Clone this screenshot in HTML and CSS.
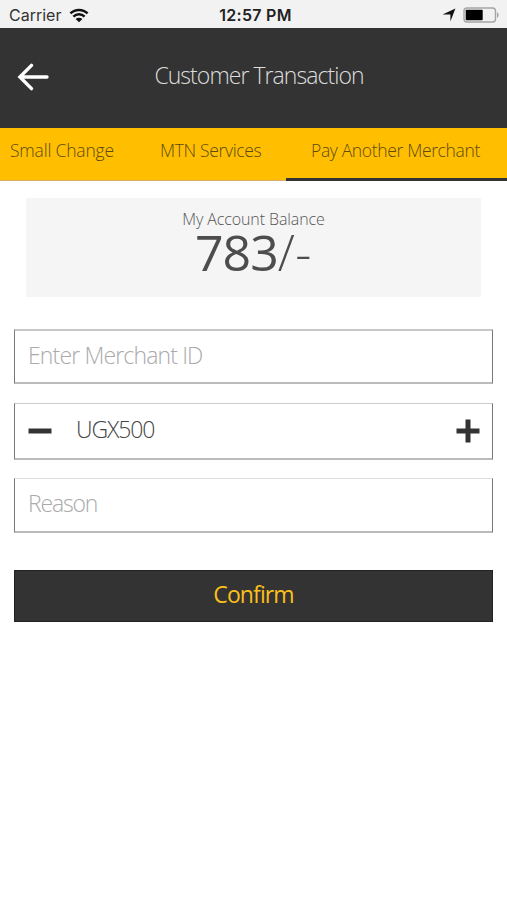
FILE: index.html
```html
<!DOCTYPE html>
<html lang="en">

<head>
    <meta charset="UTF-8">
    <meta name="viewport" content="width=device-width, initial-scale=1.0">
    <title>Customer Transaction</title>
    <link rel="stylesheet" href="styles.css">
</head>

<body>
    <div class="status-bar">
        <div class="status-left">
            <span class="carrier">Carrier</span>
            <svg class="wifi" width="20" height="15" viewBox="0 0 20 15">
                <path d="M1.4 5.4a12.4 12.4 0 0 1 17.2 0M4.4 8.6a8.1 8.1 0 0 1 11.2 0" fill="none" stroke="#111" stroke-width="2.5" />
                <path d="M6.6 11a4.9 4.9 0 0 1 6.8 0L10 14.3z" fill="#111" />
            </svg>
        </div>
        <span class="time">12:57 PM</span>
        <div class="status-right">
            <svg width="14" height="14" viewBox="0 0 14 14">
                <path d="M13.4 0.6L8.4 13.4V6.4H0.6z" fill="#111" />
            </svg>
            <svg width="37" height="16" viewBox="0 0 37 16">
                <rect x="1" y="1" width="31.5" height="14" rx="3" fill="none" stroke="#a5a5a5" stroke-width="1.4" />
                <rect x="2.7" y="2.8" width="17" height="10.4" rx="0.8" fill="#000" />
                <path d="M34 5q3.4 3 0 6z" fill="#a5a5a5" />
            </svg>
        </div>
    </div>

    <header class="header">
        <a class="back" href="#">
            <svg width="32" height="28" viewBox="0 0 32 28">
                <path d="M14.5 2.4L2.9 14l11.6 11.6M2.9 14H30" fill="none" stroke="#fff" stroke-width="3.4" stroke-linecap="round" />
            </svg>
        </a>
        <h1>Customer Transaction</h1>
    </header>

    <nav class="tabs">
        <a class="tab tab-change" href="#">Small Change</a>
        <a class="tab tab-services" href="#">MTN Services</a>
        <a class="tab tab-merchant active" href="#">Pay Another Merchant</a>
    </nav>

    <div class="balance">
        <div class="balance-label">My Account Balance</div>
        <div class="balance-amount">783<span class="balance-suffix">/-</span></div>
    </div>

    <form class="form">
        <input class="field merchant" type="text" placeholder="Enter Merchant ID">
        <div class="field amount">
            <button class="step" type="button" aria-label="Decrease">
                <svg width="24" height="24" viewBox="0 0 24 24">
                    <path d="M0.5 12h23" stroke="#333" stroke-width="5" />
                </svg>
            </button>
            <span class="amount-value">UGX500</span>
            <button class="step" type="button" aria-label="Increase">
                <svg width="24" height="24" viewBox="0 0 24 24">
                    <path d="M0.5 12h23M12 0.5v23" stroke="#333" stroke-width="5" />
                </svg>
            </button>
        </div>
        <input class="field reason" type="text" placeholder="Reason">
        <button class="confirm" type="button">Confirm</button>
    </form>
</body>

</html>
```

FILE: styles.css
```css
* {
    box-sizing: border-box;
}

body {
    margin: 0;
    background-color: #fff;
    font-family: "Open Sans", "Noto Sans", sans-serif;
    font-weight: 300;
}

.status-bar {
    display: grid;
    grid-template-columns: 1fr auto 1fr;
    align-items: center;
    height: 28px;
    padding: 2px 7px 0 9px;
    background-color: #f2f2f2;
    font-family: Inter, "Liberation Sans", sans-serif;
    font-size: 16px;
    font-weight: 400;
    color: #333;
}

.status-left,
.status-right {
    display: flex;
    align-items: center;
    gap: 8px;
}

.status-right {
    justify-content: flex-end;
    gap: 7px;
}

.time {
    padding-left: 2px;
    font-weight: 600;
    letter-spacing: 0.3px;
    color: #222;
}

.header {
    display: grid;
    grid-template-columns: 60px 1fr 60px;
    align-items: center;
    height: 100px;
    padding: 0 0 2px;
    background-color: #333;
}

.back {
    display: flex;
    padding-left: 17px;
}

h1 {
    margin: 0;
    padding: 0 0 5px 11px;
    font-size: 23px;
    line-height: 32px;
    font-weight: 300;
    letter-spacing: -0.95px;
    text-align: center;
    white-space: nowrap;
    color: #ddd;
}

.tabs {
    display: flex;
    height: 53px;
    background-color: #ffbf00;
    border-bottom: 1px solid #d6b06a;
}

.tab {
    height: 53px;
    padding-top: 10px;
    font-size: 17.5px;
    line-height: 24px;
    letter-spacing: -0.35px;
    text-decoration: none;
    white-space: nowrap;
    color: #5e4a12;
}

.tab-change {
    width: 150px;
    padding-left: 10px;
    letter-spacing: -0.2px;
}

.tab-services {
    width: 136px;
    padding-left: 10px;
}

.tab-merchant {
    flex: 1;
    padding-left: 25px;
}

.active {
    border-bottom: 3px solid #333;
}

.balance {
    height: 99px;
    margin: 17px 26px 0;
    padding-top: 10px;
    background-color: #f5f5f5;
    text-align: center;
}

.balance-label {
    font-size: 16px;
    line-height: 22px;
    letter-spacing: -0.1px;
    color: #555;
}

.balance-amount {
    font-size: 50px;
    line-height: 45px;
    font-weight: 400;
    letter-spacing: -1px;
    color: #4d4d4d;
}

.balance-suffix {
    font-weight: 300;
    letter-spacing: 0.5px;
}

.form {
    display: flex;
    flex-direction: column;
    padding: 32px 14px 0;
}

.field {
    width: 100%;
    margin: 0;
    padding: 0 13px 5px;
    background-color: #fff;
    border: 1px solid #777;
    border-top: 2px solid #c8c8c8;
    border-bottom: 2px solid #bbb;
    border-radius: 0;
    font-family: inherit;
    font-size: 23px;
    font-weight: 300;
    letter-spacing: -0.85px;
    color: #444;
}

.field::placeholder {
    color: #aaa;
    opacity: 1;
}

.merchant {
    height: 55px;
    padding-bottom: 3px;
}

.amount {
    display: flex;
    align-items: center;
    height: 57px;
    margin-top: 19px;
    padding: 0 12px 0 13px;
    border-top: 1px solid #ccc;
    letter-spacing: -1.1px;
}

.amount-value {
    flex: 1;
    padding: 0 0 5px 24px;
}

.step {
    display: flex;
    padding: 0;
    border: none;
    background: none;
}

.reason {
    height: 55px;
    margin-top: 18px;
    border-top: 1px solid #ddd;
    letter-spacing: -1.2px;
}

.confirm {
    height: 52px;
    margin-top: 37px;
    padding: 0 0 5px;
    background-color: #333;
    border: 1px solid #222;
    font-family: inherit;
    font-size: 23px;
    font-weight: 400;
    letter-spacing: -0.9px;
    color: #fbc01a;
}
```
